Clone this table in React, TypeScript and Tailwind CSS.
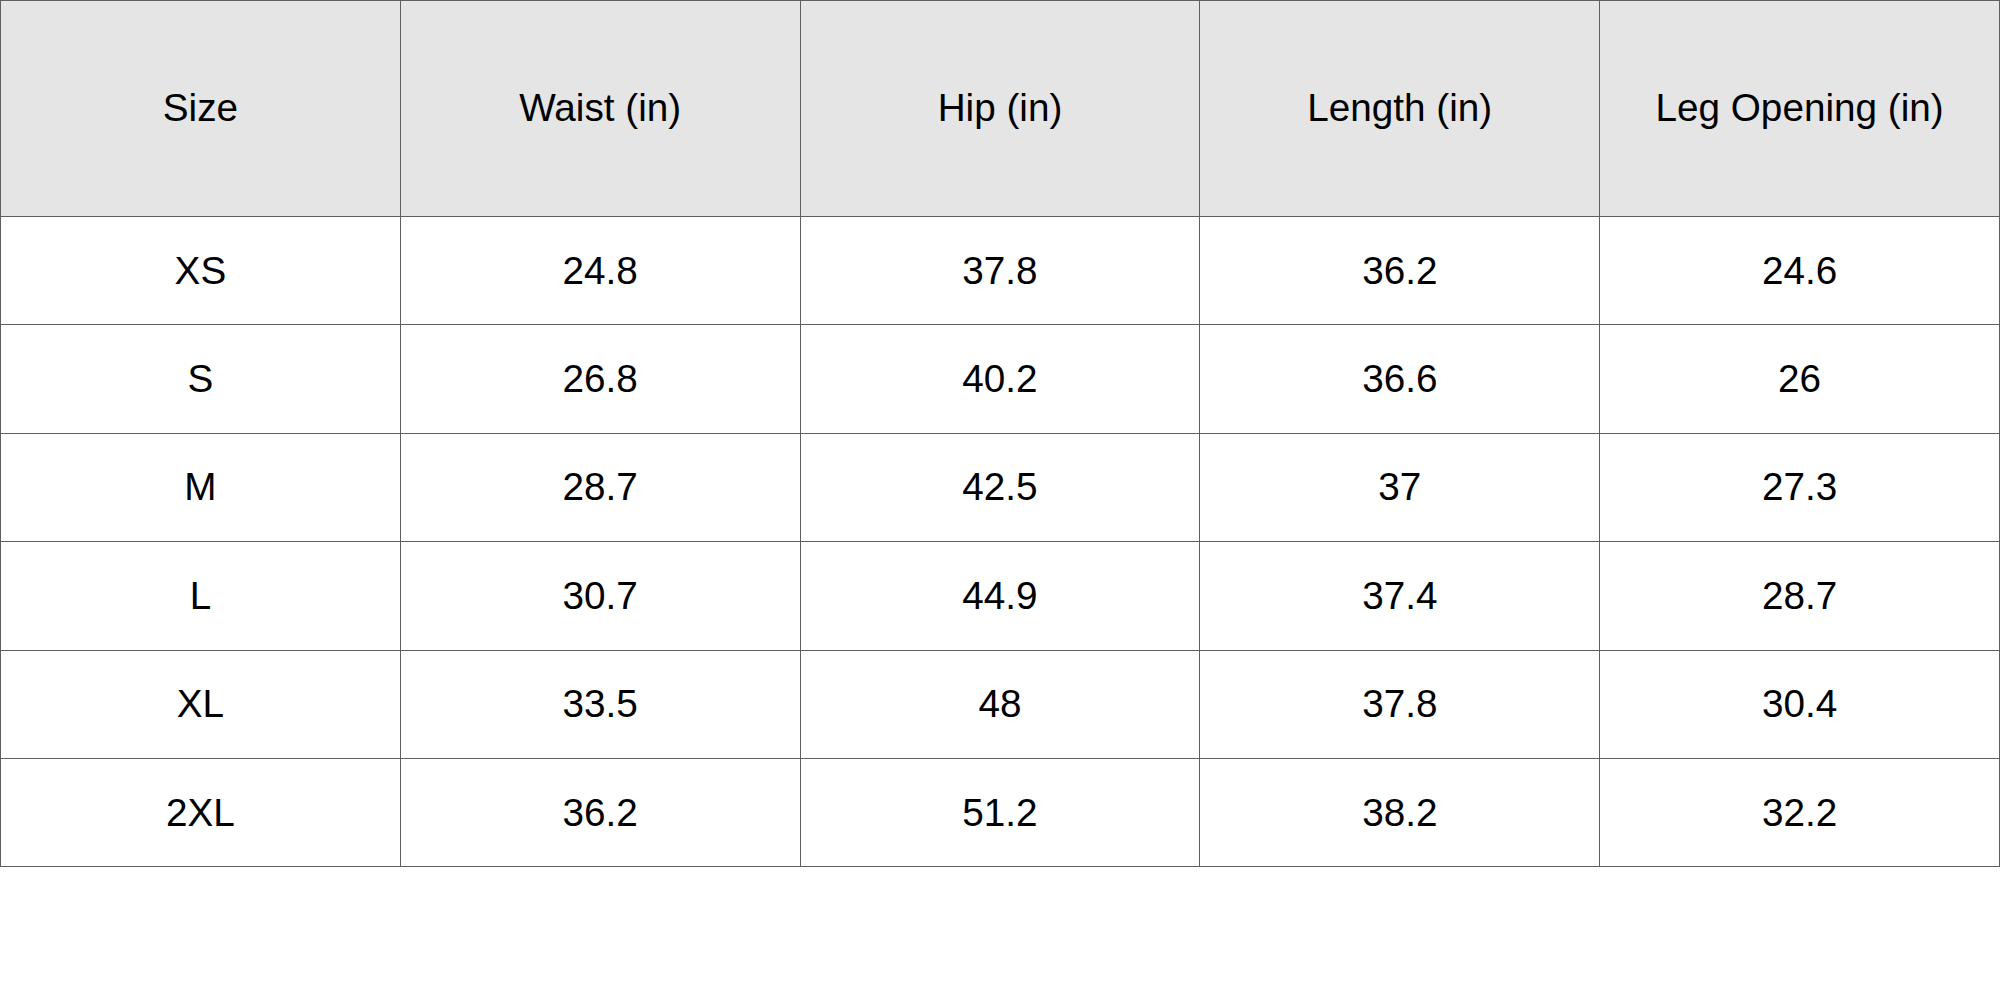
const headers = ["Size", "Waist (in)", "Hip (in)", "Length (in)", "Leg Opening (in)"];

const rows = [
    ["XS", "24.8", "37.8", "36.2", "24.6"],
    ["S", "26.8", "40.2", "36.6", "26"],
    ["M", "28.7", "42.5", "37", "27.3"],
    ["L", "30.7", "44.9", "37.4", "28.7"],
    ["XL", "33.5", "48", "37.8", "30.4"],
    ["2XL", "36.2", "51.2", "38.2", "32.2"],
];

const App = () => {
    return (
        <div className="w-[2000px] h-[1000px] bg-white" style={{ fontFamily: '"Liberation Sans", Arial, sans-serif' }}>
            <table className="w-full table-fixed border-collapse text-[38.7px] text-black">
                <thead>
                    <tr className="h-[216px] bg-[#e5e5e5]">
                        {headers.map((h) => (
                            <th key={h} className="border border-[#5f5f5f] font-normal text-center align-middle">
                                {h}
                            </th>
                        ))}
                    </tr>
                </thead>
                <tbody>
                    {rows.map((row) => (
                        <tr key={row[0]} className="h-[108.4px]">
                            {row.map((cell, i) => (
                                <td key={i} className="border border-[#5f5f5f] text-center align-middle">
                                    {cell}
                                </td>
                            ))}
                        </tr>
                    ))}
                </tbody>
            </table>
        </div>
    );
};

export default App;
